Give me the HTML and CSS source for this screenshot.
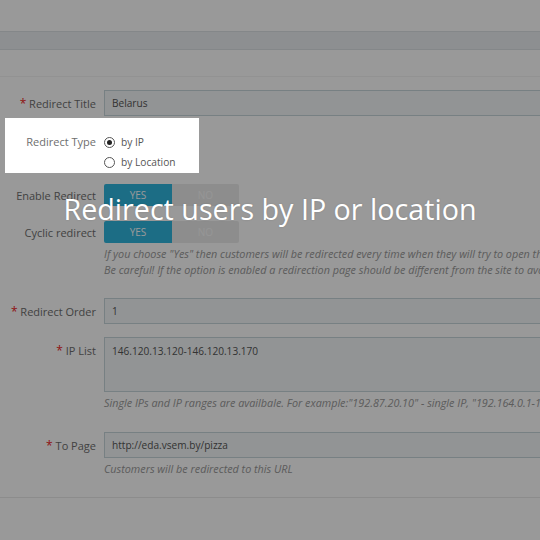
FILE: index.html
```html
<!DOCTYPE html>
<html>
<head>
<meta charset="utf-8">
<link rel="stylesheet" href="styles.css">
</head>
<body>
<div class="page">
  <div class="topbar"></div>
  <div class="band"></div>
  <div class="subhead"></div>
  <div class="form">
    <div class="row r-title">
      <div class="lbl"><span class="req">*</span> Redirect Title</div>
      <div class="input">Belarus</div>
    </div>
    <div class="row highlight">
      <div class="lbl lbl-top">Redirect Type</div>
      <div class="radios">
        <div class="radio"><span class="dot on"></span>by IP</div>
        <div class="radio"><span class="dot"></span>by Location</div>
      </div>
    </div>
    <div class="row r-enable">
      <div class="lbl">Enable Redirect</div>
      <div class="switch"><span class="yes">YES</span><span class="no">NO</span></div>
    </div>
    <div class="row r-cyclic">
      <div class="lbl">Cyclic redirect</div>
      <div class="switch"><span class="yes">YES</span><span class="no">NO</span></div>
    </div>
    <div class="help h-cyclic">
      <p>If you choose "Yes" then customers will be redirected every time when they will try to open the site.</p>
      <p>Be careful! If the option is enabled a redirection page should be different from the site to avoid a loop.</p>
    </div>
    <div class="row r-order">
      <div class="lbl"><span class="req">*</span> Redirect Order</div>
      <div class="input">1</div>
    </div>
    <div class="row r-ip">
      <div class="lbl lbl-ip"><span class="req">*</span> IP List</div>
      <div class="input textarea">146.120.13.120-146.120.13.170</div>
    </div>
    <div class="help h-ip">
      <p>Single IPs and IP ranges are availbale. For example:"192.87.20.10" - single IP, "192.164.0.1-192.164.0.255" - IP range.</p>
    </div>
    <div class="row r-page">
      <div class="lbl"><span class="req">*</span> To Page</div>
      <div class="input">http://eda.vsem.by/pizza</div>
    </div>
    <div class="help h-page">
      <p>Customers will be redirected to this URL</p>
    </div>
    <div class="footer"></div>
  </div>
</div>
<div class="overlay"></div>
<h1 class="headline">Redirect users by IP or location</h1>
</body>
</html>
```

FILE: styles.css
```css
* { box-sizing: border-box; margin: 0; padding: 0; }
html, body { width: 540px; height: 540px; overflow: hidden; }
body {
  background: #fff;
  font-family: "Open Sans", "Liberation Sans", sans-serif;
  font-size: 11px;
  color: #707070;
  position: relative;
}
.page { width: 540px; overflow: hidden; }
.topbar { height: 31px; }
.band {
  height: 19px;
  background: #eceff2;
  border-top: 1px solid #dde1e5;
  border-bottom: 1px solid #dde1e5;
}
.subhead { height: 27px; border-bottom: 1px solid #f3f3f3; }
.form { padding-top: 13px; width: 900px; }

.row {
  display: grid;
  grid-template-columns: 96px 700px;
  column-gap: 8px;
  align-items: center;
}
.lbl { text-align: right; white-space: nowrap; color: #6e6e6e; }
.req { color: #ee1c1c; font-size: 12px; }

.input {
  height: 26px;
  border: 1px solid #c7d6db;
  background: #f4f7f8;
  padding: 0 7px;
  line-height: 24px;
  font-size: 10.1px;
  color: #555;
}
.textarea { height: 55px; line-height: 16px; padding-top: 5px; }
.r-ip { align-items: start; }
.lbl-ip { padding-top: 6px; line-height: 16px; }

.highlight {
  position: relative;
  z-index: 2;
  background: #fff;
  margin-top: 2px;
  margin-left: 5px;
  width: 194px;
  height: 55px;
  grid-template-columns: 91px 1fr;
  align-items: start;
  padding-top: 14px;
}
.lbl-top { line-height: 20px; }
.radio { display: flex; align-items: center; height: 20px; color: #555; font-size: 10.2px; }
.dot {
  width: 11px; height: 11px;
  border: 1px solid #555;
  border-radius: 50%;
  margin-right: 6px;
  display: flex; align-items: center; justify-content: center;
}
.dot.on::after {
  content: "";
  width: 5px; height: 5px;
  border-radius: 50%;
  background: #222;
}

.r-enable { margin-top: 11px; }
.r-cyclic { margin-top: 15px; }
.switch { display: flex; width: 135px; height: 22px; font-size: 10px; }
.switch span { display: flex; align-items: center; justify-content: center; }
.yes { width: 68px; background: #30b6de; color: #fff; border-radius: 2px 0 0 2px; }
.no { width: 67px; background: #ececec; color: #fafafa; border-radius: 0 2px 2px 0; }

.help {
  margin-left: 104px;
  font-style: italic;
  font-size: 10.8px;
  line-height: 16px;
  color: #999;
  white-space: nowrap;
}
.h-cyclic { margin-top: 3px; }
.r-order { margin-top: 20px; }
.r-ip { margin-top: 13px; }
.h-ip { margin-top: 3px; }
.r-page { margin-top: 21px; }
.h-page { margin-top: 3px; }
.footer { margin-top: 20px; border-top: 1px solid #e9e9e9; height: 60px; }

.overlay {
  position: absolute;
  inset: 0;
  background: rgba(0, 0, 0, 0.4);
  z-index: 1;
}
.headline {
  position: absolute;
  left: 0; right: 0;
  top: 194px;
  z-index: 3;
  text-align: center;
  font-family: "Open Sans", sans-serif;
  font-weight: 400;
  font-size: 28.7px;
  line-height: 29px;
  color: #fff;
  text-shadow: 0 0 2px rgba(0,0,0,0.15);
}
```
